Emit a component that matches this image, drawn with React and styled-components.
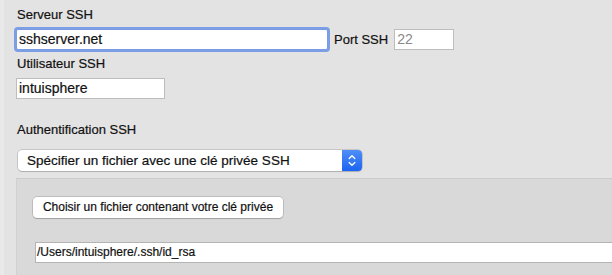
import React from "react";
import styled, { createGlobalStyle } from "styled-components";

const GlobalStyle = createGlobalStyle`
  html, body {
    margin: 0;
    padding: 0;
    background: #e3e3e3;
    font-family: "Liberation Sans", Arial, sans-serif;
    color: #111;
    -webkit-text-stroke: 0.2px currentColor;
  }
`;

const Page = styled.div`
  width: 612px;
  height: 275px;
  overflow: hidden;
  box-sizing: border-box;
  border-left: 4px solid #e9e9e9;
  padding: 7px 0 0 12px;
  display: flex;
  flex-direction: column;
`;

const Label = styled.div`
  font-size: 13px;
  line-height: 16px;
  padding-left: 1px;
  margin-top: ${(p) => p.$top || 0}px;
`;

const Row = styled.div`
  display: flex;
  align-items: center;
  margin-top: ${(p) => p.$top || 0}px;
`;

const Input = styled.div`
  box-sizing: border-box;
  width: ${(p) => p.$width}px;
  height: 21px;
  background: #fff;
  border: 1px solid ${(p) => (p.$focused ? "#7a9ce4" : "#bdbdbd")};
  box-shadow: ${(p) =>
    p.$focused ? "0 0 0 2px rgba(104, 146, 228, 0.85)" : "none"};
  border-radius: ${(p) => (p.$focused ? "2px" : "0")};
  font-size: ${(p) => p.$size || 14}px;
  line-height: 19px;
  padding-left: 2px;
  color: ${(p) => (p.$muted ? "#8a8a8a" : "#111")};
  -webkit-text-stroke: ${(p) => (p.$muted ? "0" : "0.2px")} currentColor;
  white-space: nowrap;
  flex-shrink: 0;
`;

const InlineLabel = styled.span`
  font-size: 13px;
  margin: 0 6px 0 6px;
`;

const Select = styled.div`
  box-sizing: border-box;
  margin: 12px 0 0 2px;
  width: 344px;
  height: 21px;
  display: flex;
  align-items: stretch;
  background: #fff;
  border-radius: 4px;
  box-shadow: 0 0 0 0.5px rgba(0, 0, 0, 0.25), 0 1px 1px rgba(0, 0, 0, 0.12);
  font-size: 13.5px;
`;

const SelectText = styled.div`
  flex: 1;
  padding-left: 9px;
  line-height: 21px;
`;

const Stepper = styled.div`
  width: 20px;
  background: linear-gradient(#4f8ff7, #1c64f2);
  border-radius: 0 4px 4px 0;
  display: flex;
  align-items: center;
  justify-content: center;
`;

const Box = styled.div`
  flex: 1;
  margin-top: 7px;
  background: #d9d9d9;
  border-top: 1px solid #cbcbcb;
  border-left: 1px solid #d0d0d0;
  padding: 18px 0 0 16px;
  display: flex;
  flex-direction: column;
  align-items: flex-start;
`;

const Button = styled.div`
  box-sizing: border-box;
  width: 250px;
  height: 21px;
  background: #fff;
  border-radius: 4px;
  box-shadow: 0 0 0 0.5px rgba(0, 0, 0, 0.25), 0 1px 1px rgba(0, 0, 0, 0.15);
  font-size: 12px;
  line-height: 21px;
  text-align: center;
`;

const PathInput = styled(Input)`
  margin: 24px 0 0 2px;
  width: 600px;
  font-size: 12px;
  border-color: #b4b4b4;
  padding-left: 1px;
`;

export default function App() {
  return (
    <>
      <GlobalStyle />
      <Page>
        <Label>Serveur SSH</Label>
        <Row $top={6}>
          <Input $width={312} $focused>
            sshserver.net
          </Input>
          <InlineLabel>Port SSH</InlineLabel>
          <Input $width={60} $muted>
            22
          </Input>
        </Row>
        <Label $top={6}>Utilisateur SSH</Label>
        <Row $top={6}>
          <Input $width={149}>intuisphere</Input>
        </Row>
        <Label $top={23}>Authentification SSH</Label>
        <Select>
          <SelectText>Spécifier un fichier avec une clé privée SSH</SelectText>
          <Stepper>
            <svg width="8" height="13" viewBox="0 0 8 13" fill="none">
              <path
                d="M1.2 4.6 L4 1.8 L6.8 4.6 M1.2 8.4 L4 11.2 L6.8 8.4"
                stroke="#fff"
                strokeWidth="1.4"
                strokeLinecap="round"
                strokeLinejoin="round"
              />
            </svg>
          </Stepper>
        </Select>
        <Box>
          <Button>Choisir un fichier contenant votre clé privée</Button>
          <PathInput>/Users/intuisphere/.ssh/id_rsa</PathInput>
        </Box>
      </Page>
    </>
  );
}
